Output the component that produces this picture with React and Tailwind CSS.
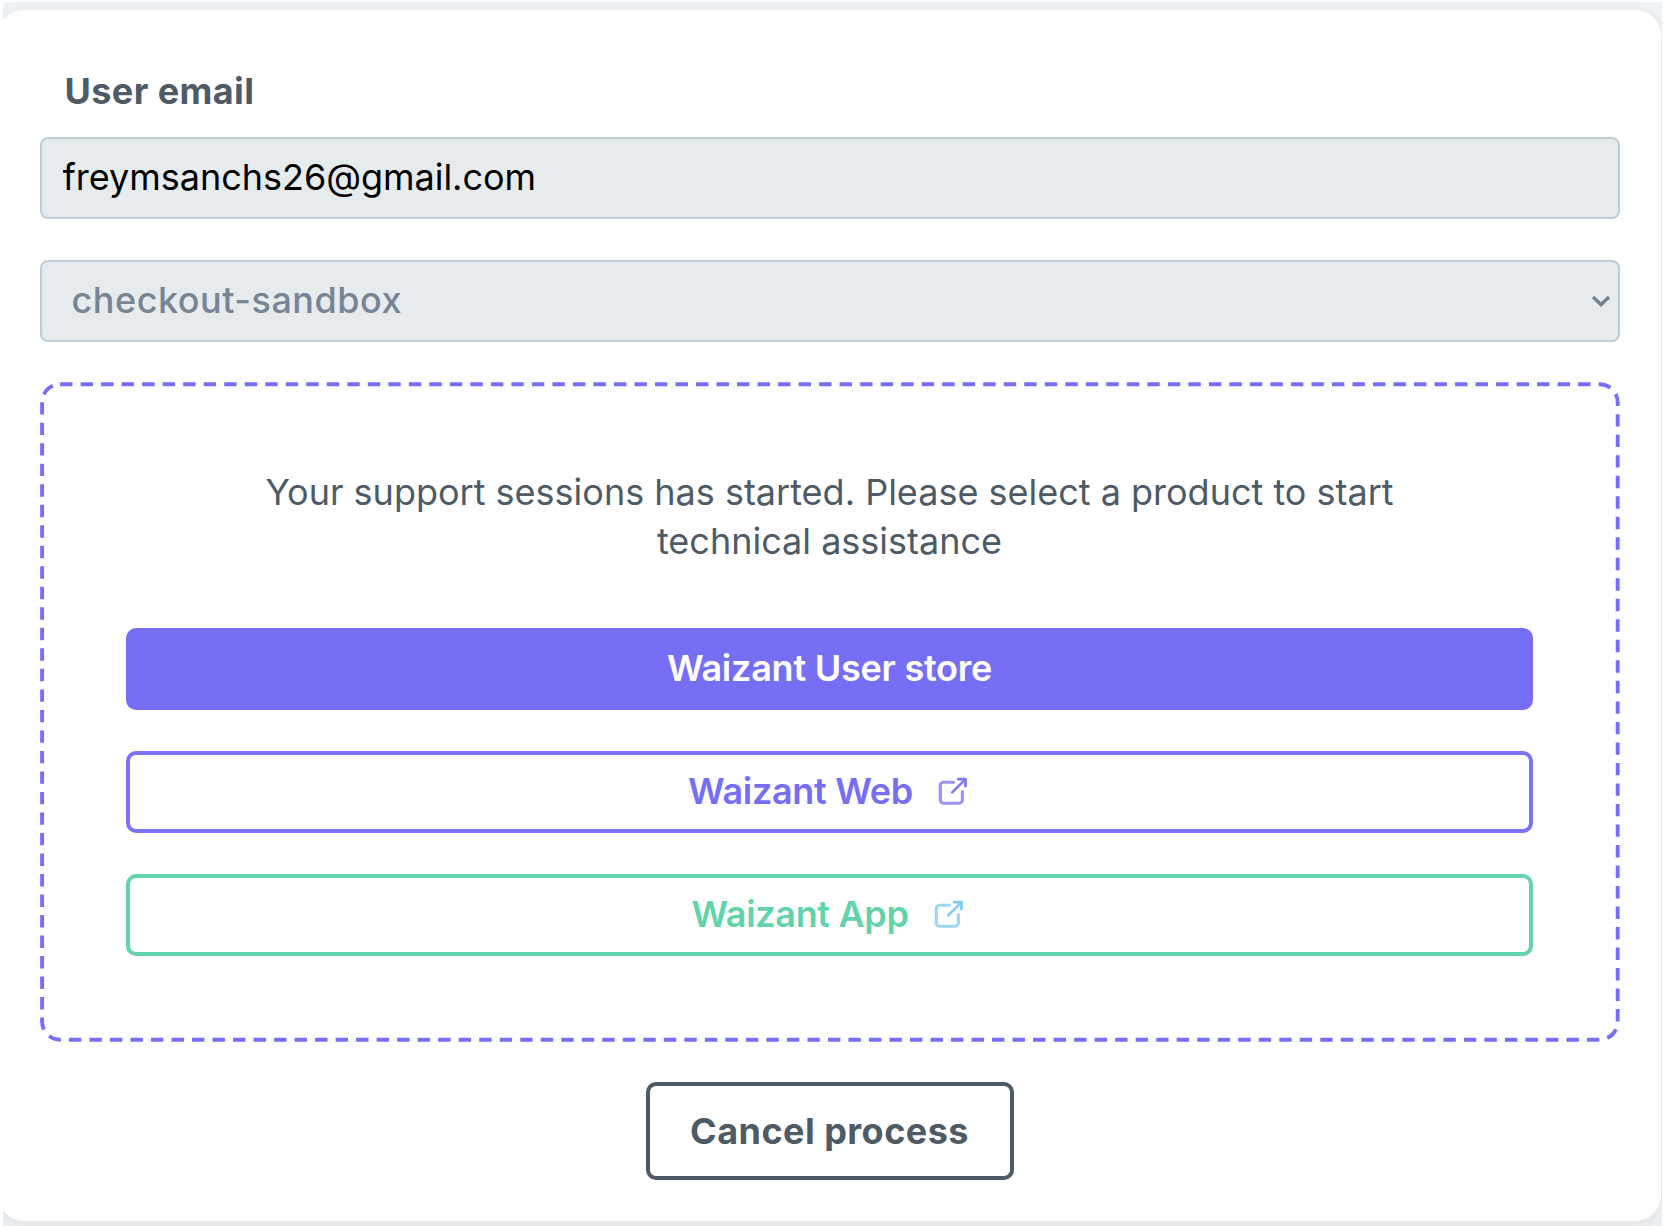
import React from "react";

function ExternalLinkIcon({ frame, arrow, className }) {
  return (
    <svg width="30" height="30" viewBox="0 0 30 30" fill="none" className={className}>
      <path
        d="M15.5 5.2H5.6A3.3 3.3 0 0 0 2.3 8.5V22.9A3.3 3.3 0 0 0 5.6 26.2H21.1A3.3 3.3 0 0 0 24.4 22.9V14.6"
        stroke={frame}
        strokeWidth="3.1"
        strokeLinecap="round"
      />
      <path d="M14.2 15.4L27 2.6" stroke={arrow} strokeWidth="2.5" strokeLinecap="round" />
      <path d="M20.2 2.1H27.5V9.2" stroke={arrow} strokeWidth="2.8" strokeLinecap="round" strokeLinejoin="round" />
    </svg>
  );
}

function DashedFrame() {
  return (
    <svg className="pointer-events-none absolute inset-0" width="1580" height="660" fill="none">
      <rect
        x="2.1"
        y="2.3"
        width="1575.6"
        height="655.4"
        rx="18"
        stroke="#776ef6"
        strokeWidth="3.9"
        strokeDasharray="12.4 8.114"
      />
    </svg>
  );
}

export default function App() {
  return (
    <div className="h-[1226px] w-[1666px] overflow-hidden bg-white pt-[2px] pr-1 pl-[3px] font-['Inter',sans-serif] text-[36px] text-[#4e5b67]">
      <div className="h-[1224px] overflow-hidden bg-[#eef2f4] pt-2">
        <main className="-ml-[5px] flex h-[1211px] w-[1663px] flex-col items-center rounded-[26px] bg-white pt-[61px] shadow-[0_4px_16px_rgba(0,0,0,0.07)]">
          <div className="flex w-[1580px] flex-col">
            <label htmlFor="email" className="ml-[25px] h-[66px] text-[36px] leading-[40px] font-bold tracking-[0.4px]">
              User email
            </label>
            <input
              id="email"
              readOnly
              value="freymsanchs26@gmail.com"
              className="h-[82px] w-full rounded-[8px] border-2 border-[#c1ccd9] bg-[#e6ebee] pb-[2px] pl-[21px] tracking-[-0.02px] text-black outline-none"
            />
            <div className="relative mt-[41px] flex h-[82px] w-full items-center justify-between rounded-[8px] border-2 border-[#c1ccd9] bg-[#e6ebee] pr-[7px] pb-[2px] pl-[30px]">
              <span className="font-medium tracking-[0.52px] text-[#768494]">checkout-sandbox</span>
              <svg width="20" height="14" viewBox="0 0 20 14" fill="none" className="mt-[2px]">
                <path d="M2 3L10 10.6L18 3" stroke="#768391" strokeWidth="3.4" />
              </svg>
            </div>

            <section className="relative mt-10 flex h-[660px] flex-col items-center pt-[86px]">
              <DashedFrame />
              <p className="w-[1145px] text-center leading-[49.2px]">
                Your support sessions has started. Please select a product to start technical assistance
              </p>
              <div className="mt-[61.6px] flex w-[1407px] flex-col gap-[41px] font-semibold">
                <button className="h-[82px] rounded-[10px] bg-[#776ef6] pb-[2px] tracking-[-0.24px] text-white">Waizant User store</button>
                <button className="flex h-[82px] items-center justify-center rounded-[10px] border-4 border-[#7b72f6] pr-[3px] pb-[3px] tracking-[-0.32px] text-[#776ef6]">
                  Waizant Web
                  <ExternalLinkIcon frame="#9a92f9" arrow="#7e75f6" className="mt-[3px] ml-[25px]" />
                </button>
                <button className="flex h-[82px] items-center justify-center rounded-[10px] border-4 border-[#65d3ad] pr-[4px] pb-[3px] tracking-[-0.33px] text-[#62d3ab]">
                  Waizant App
                  <ExternalLinkIcon frame="#9ad5f1" arrow="#80caed" className="mt-[3px] ml-[25px]" />
                </button>
              </div>
            </section>

            <button className="mt-10 h-[98px] w-[368px] self-center rounded-[10px] border-4 border-[#4e5b67] font-bold tracking-[0.47px]">
              Cancel process
            </button>
          </div>
        </main>
      </div>
    </div>
  );
}
